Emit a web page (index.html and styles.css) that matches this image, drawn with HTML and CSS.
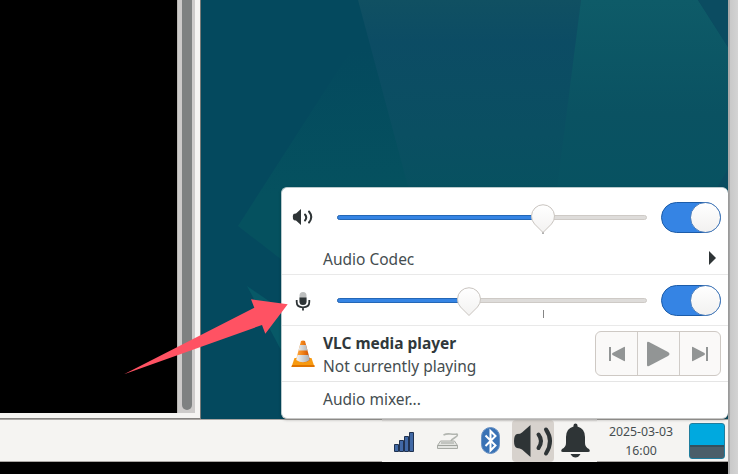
FILE: index.html
```html
<!DOCTYPE html>
<html lang="en">
<head>
<meta charset="utf-8">
<title>Desktop audio panel</title>
<link rel="stylesheet" href="styles.css">
</head>
<body>
<div class="screen">
  <div class="desktop">
    <main class="workspace">
      <section class="terminal">
        <div class="terminal-body"></div>
        <div class="scrollbar"><div class="scroll-thumb"></div></div>
      </section>
      <svg class="wallpaper" viewBox="201 0 527 419" preserveAspectRatio="none">
        <defs>
          <linearGradient id="base" x1="0" y1="0" x2="1" y2="0"><stop offset="0" stop-color="#04495e"/><stop offset=".35" stop-color="#04495e"/><stop offset=".65" stop-color="#0a4c60"/></linearGradient>
          <linearGradient id="mid" x1="0" y1="0" x2="0" y2="1"><stop offset="0" stop-color="#105062"/><stop offset=".22" stop-color="#0c4c64"/><stop offset=".7" stop-color="#0a4f62"/><stop offset="1" stop-color="#075160"/></linearGradient>
          <linearGradient id="right" x1="0" y1="0" x2="0" y2="1"><stop offset="0" stop-color="#0e5b68"/><stop offset=".6" stop-color="#0a5262"/><stop offset="1" stop-color="#075261"/></linearGradient>
          <linearGradient id="low" gradientUnits="userSpaceOnUse" x1="320" y1="50" x2="330" y2="190"><stop offset="0" stop-color="#04495e"/><stop offset="1" stop-color="#05515f"/></linearGradient>
        </defs>
        <path fill="url(#base)" d="M201 0h527v419H201z"/>
        <path fill="url(#low)" d="M351 50L238 226l44 34h180V90L380 50z"/>
        <path fill="url(#mid)" d="M358 0h223l-23 190H409z"/>
        <path fill="url(#right)" d="M581 0h117l30 47v122l-12 20H557z"/>
        <path fill="#0b4c61" d="M698 0h30v47z"/>
        <path fill="#075967" d="M247 286l35 24v42z"/>
      </svg>
    </main>
    <footer class="taskbar">
      <div class="tray">
        <svg class="signal" viewBox="0 0 22 20"><path fill="#4169a6" stroke="#203250" d="M.5 12.500h4v7h-4zM5.500 8.500h4v11h-4zM10.500 4.500h4v15h-4zM15.500 .500h4v19h-4z"/></svg>
        <svg class="keyboard" viewBox="0 0 24 18"><path fill="none" stroke="#b2b5b0" stroke-width="1.500" d="M7.500 3q3-1.500 7-1t6.500 0q1.500 1.500-2 3.500t-4 3.500"/><path fill="#e3e4e1" stroke="#a8aba6" d="M4.500 9h14l3 4.500v3H1.500v-3z"/><path stroke="#a0a39e" d="M1.500 13.500h20M5 11h13"/></svg>
        <svg class="bluetooth" viewBox="0 0 20 28"><rect x=".5" y=".5" width="18" height="26" rx="9" fill="#3972b5" stroke="#6891c4"/><path d="M4.500 8.500l10 10-5 5V4l5 5-10 10" fill="none" stroke="#fff" stroke-width="2"/></svg>
        <div class="volume-button"><svg viewBox="0 0 40 36"><path fill="#2e3436" d="M4 12q3.500 0 5-1.500L17.500 3v32L9 27.500Q7 26 4 26q-3-1-3-7t3-7z"/><path fill="none" stroke="#2e3436" stroke-width="4" stroke-linecap="round" d="M25.500 12.500q5 6.500 0 13.500M33 7.500q8 11.500 0 24"/></svg></div>
        <svg class="bell" viewBox="0 0 30 36"><path fill="#2e3436" d="M12.500 2.500q0-2 2-2t2 2v1Q24 5.500 24 14v6q0 4 4 6 2 3-1 3H2q-3 0-1-3 4-2 4-6v-6Q5 5.500 12.500 3.500zM9.500 31h10q-2 3.500-5 3.500t-5-3.500z"/></svg>
        <div class="clock"><span>2025-03-03</span><span>16:00</span></div>
        <div class="pager"></div>
      </div>
    </footer>
    <div class="below"></div>

    <aside class="menu">
      <section class="output">
        <div class="slider-row">
          <svg class="row-icon" viewBox="0 0 22 20"><path fill="#2e3436" d="M1.500 7Q2 6.500 4 6.500L9 2v16l-5-4.500q-2.500 0-3-1.500-.8-3 .5-5z"/><path fill="none" stroke="#2e3436" stroke-width="2" stroke-linecap="round" d="M13 7.500q2.500 3 0 6M17 4.500q4.500 5.500 0 11"/></svg>
          <div class="slider high"><div class="fill"></div><svg class="knob" viewBox="0 0 26 31"><path stroke="#656565" d="M13 27v3"/><path fill="url(#knob-fill)" stroke="#c9c4bf" d="M13 28.500L4.500 20A11.500 11.500 0 1 1 21.500 20z"/><defs><linearGradient id="knob-fill" x1="0" y1="0" x2="0" y2="1"><stop stop-color="#fff"/><stop offset="1" stop-color="#f3f2f1"/></linearGradient></defs></svg></div>
          <div class="switch"><div class="switch-knob"></div></div>
        </div>
        <div class="device"><span>Audio Codec</span><i class="submenu"></i></div>
      </section>
      <section class="input">
        <div class="slider-row">
          <svg class="row-icon" viewBox="0 0 22 20"><rect x="7.500" y="1" width="7" height="13" rx="3.500" fill="#bcbebe"/><path fill="#2e3436" d="M7.500 6.500h7v4q0 3.500-3.500 3.500t-3.500-3.500z"/><path fill="none" stroke="#2e3436" stroke-width="1.800" d="M4.700 9v2q0 5.300 6.300 5.300t6.300-5.300V9M11 16v3.500"/></svg>
          <div class="slider low"><div class="fill"></div><svg class="knob" viewBox="0 0 26 31"><path fill="url(#knob-fill)" stroke="#c9c4bf" d="M13 28.500L4.500 20A11.500 11.500 0 1 1 21.500 20z"/></svg><i class="tick"></i></div>
          <div class="switch"><div class="switch-knob"></div></div>
        </div>
      </section>
      <section class="player">
        <svg class="cone" viewBox="0 0 24 28"><defs><linearGradient id="cone" x1="0" x2="1"><stop stop-color="#ffac42"/><stop offset=".5" stop-color="#f07f16"/><stop offset="1" stop-color="#c94c00"/></linearGradient><linearGradient id="white-band" x1="0" x2="1"><stop stop-color="#f5f5f5"/><stop offset="1" stop-color="#a9adb1"/></linearGradient></defs><path fill="#f79a10" d="M3.500 18h17l3 9H.500z"/><path fill="#e07400" d="M1 25h22.500v2H.500z"/><path fill="url(#cone)" d="M10 1q2-1 4 0l5 19q-7 5-14 0z"/><path fill="url(#white-band)" d="M9 5h6l1.500 5.500h-9zM6.500 15h11l1.200 5q-6.700 4.500-13.400 0z"/></svg>
        <div class="player-text"><strong>VLC media player</strong><span>Not currently playing</span></div>
        <div class="controls">
          <div><svg viewBox="0 0 18 16"><path fill="#929595" d="M1 1h2v14H1zM17 1.500v13q0 1-1 .5L4.500 9q-1-1 0-2L16 1q1-.5 1 .5z"/></svg></div>
          <div><svg class="play" viewBox="0 0 24 26"><path fill="#929595" d="M1 2Q1 0 3 1l19 10q3 2 0 4L3 25q-2 1-2-1z"/></svg></div>
          <div><svg viewBox="0 0 18 16"><path fill="#929595" d="M15 1h2v14h-2zM1 1.500v13q0 1 1 .5L13.500 9q1-1 0-2L2 1q-1-.5-1 .5z"/></svg></div>
        </div>
      </section>
      <section class="mixer">Audio mixer...</section>
    </aside>
    <svg class="pointer" viewBox="0 0 166 80"><path fill="#ff5263" d="M0 77.300L130.300 10.700 127 2.300l36.700 5-22.400 29.400-3.300-8.700z"/></svg>
  </div>
  <div class="edge"></div>
</div>
</body>
</html>
```

FILE: styles.css
```css
* { box-sizing: border-box; }
body { margin: 0; background: #000; font: 15.5px "Noto Sans", sans-serif; color: #454d50; }
svg { display: block; overflow: visible; }
.screen { display: flex; width: 738px; height: 474px; overflow: hidden; }
.desktop { position: relative; width: 728px; height: 474px; }
.edge { width: 10px; border-left: 2px solid #aaa; background: linear-gradient(90deg, #c9c9c9, #d3d3d3); }
.workspace { display: flex; height: 419px; }
.terminal { display: flex; width: 201px; height: 419px; padding: 0 5px 5px 0; background: #f5f4f2; border-right: 1px solid #777a78; border-bottom: 1px solid #858381; }
.terminal-body { width: 177px; background: #000; }
.scrollbar { width: 18px; padding: 0 4px 3px 5px; background: #cdcbca; border-left: 1px solid #b9b6b3; }
.scroll-thumb { width: 10px; height: 410px; margin-left: -1px; border-radius: 0 0 5px 5px; background: #7e8181; }
.wallpaper { width: 527px; height: 419px; }
.taskbar { height: 43px; background: #f5f4f2; border-top: 1px solid #aaa7a4; border-bottom: 1px solid #aaa7a4; }
.tray { display: flex; height: 41px; padding-left: 394px; }
.tray::before { content: ""; position: absolute; left: 382px; top: 419px; width: 215px; height: 43px; background: linear-gradient(#d5d3d1, #f5f4f2 3px); }
.tray > * { position: relative; }
.signal { width: 22px; height: 20px; margin-top: 12px; }
.keyboard { width: 24px; height: 18px; margin: 12px 0 0 20px; }
.bluetooth { width: 20px; height: 28px; margin: 7px 0 0 21px; }
.volume-button { width: 42px; height: 42px; margin-left: 11px; border-radius: 4px; background: #d7d2cd; }
.volume-button svg { width: 40px; height: 36px; margin: 2px 0 0 1px; }
.bell { width: 30px; height: 36px; margin: 3px 0 0 7px; }
.clock { display: flex; flex-direction: column; align-items: center; width: 90px; margin-left: 5px; padding-top: 2px; font-size: 12.300px; line-height: 19px; }
.pager { width: 36px; height: 36px; margin: 3px 0 0 3px; border: 1px solid #207d9d; border-radius: 3px; background: linear-gradient(#00a9df 21px, #344f5c 21px 23px, #4b5e69 23px); }
.below { height: 12px; background: #000; }
.menu { position: absolute; left: 281px; top: 187px; width: 447px; height: 232px; border: 1px solid #b9cacd; border-right: 0; border-bottom-color: #c6c6c5; border-radius: 6px; background: #fff; box-shadow: 0 1px 3px #0004; }
.output { height: 87px; border-bottom: 1px solid #e9e9e9; }
.input { height: 51px; border-bottom: 1px solid #e9e9e9; }
.slider-row { display: flex; align-items: center; height: 50px; padding: 1px 7px 0 10px; }
.output .slider-row { height: 51px; padding-top: 7px; }
.row-icon { width: 22px; height: 20px; }
.slider { position: relative; width: 310px; height: 5px; margin-left: 23px; border: 1px solid #cecac6; border-radius: 3px; background: #dedcda; }
.fill { height: 5px; margin: -1px; border: 1px solid #2467b6; border-radius: 3px; background: #3584e4; }
.high .fill { width: 206px; }
.low .fill { width: 132px; }
.knob { position: absolute; top: -12px; width: 26px; height: 31px; }
.high .knob { left: 192px; }
.low .knob { left: 118px; }
.tick { position: absolute; left: 205px; top: 11px; width: 1px; height: 8px; background: #858585; }
.switch { width: 60px; height: 31px; margin-left: 14px; padding-left: 28px; border: 1px solid #1c5ca9; border-radius: 16px; background: #3584e4; }
.switch-knob { width: 31px; height: 31px; margin-top: -1px; border: 1px solid #5282bd; border-radius: 50%; background: linear-gradient(#fff, #f2f1f0); }
.device { display: flex; justify-content: space-between; height: 36px; padding: 9px 12px 0 41px; line-height: 23px; }
.submenu { width: 0; height: 14px; margin-top: 3px; border-left: 7px solid #2e3436; border-top: 7px solid transparent; border-bottom: 7px solid transparent; }
.player { display: flex; height: 56px; border-bottom: 1px solid #e5e5e5; }
.cone { width: 24px; height: 28px; margin: 14px 0 0 9px; }
.player-text { display: flex; flex-direction: column; width: 272px; margin-left: 8px; padding-top: 6px; line-height: 23px; }
.player-text strong { color: #30383b; }
.controls { display: grid; grid-template-columns: repeat(3, 1fr); width: 126px; height: 45px; margin-top: 5px; border: 1px solid #cec9c4; border-radius: 6px; background: #faf9f8; }
.controls > div { display: grid; place-items: center; border-left: 1px solid #d0ccc8; }
.controls > div:first-child { border-left: 0; }
.controls svg { width: 18px; height: 16px; }
.controls .play { width: 24px; height: 26px; }
.mixer { padding: 6px 0 0 41px; line-height: 23px; }
.pointer { position: absolute; left: 124px; top: 297px; width: 166px; height: 80px; }
```
